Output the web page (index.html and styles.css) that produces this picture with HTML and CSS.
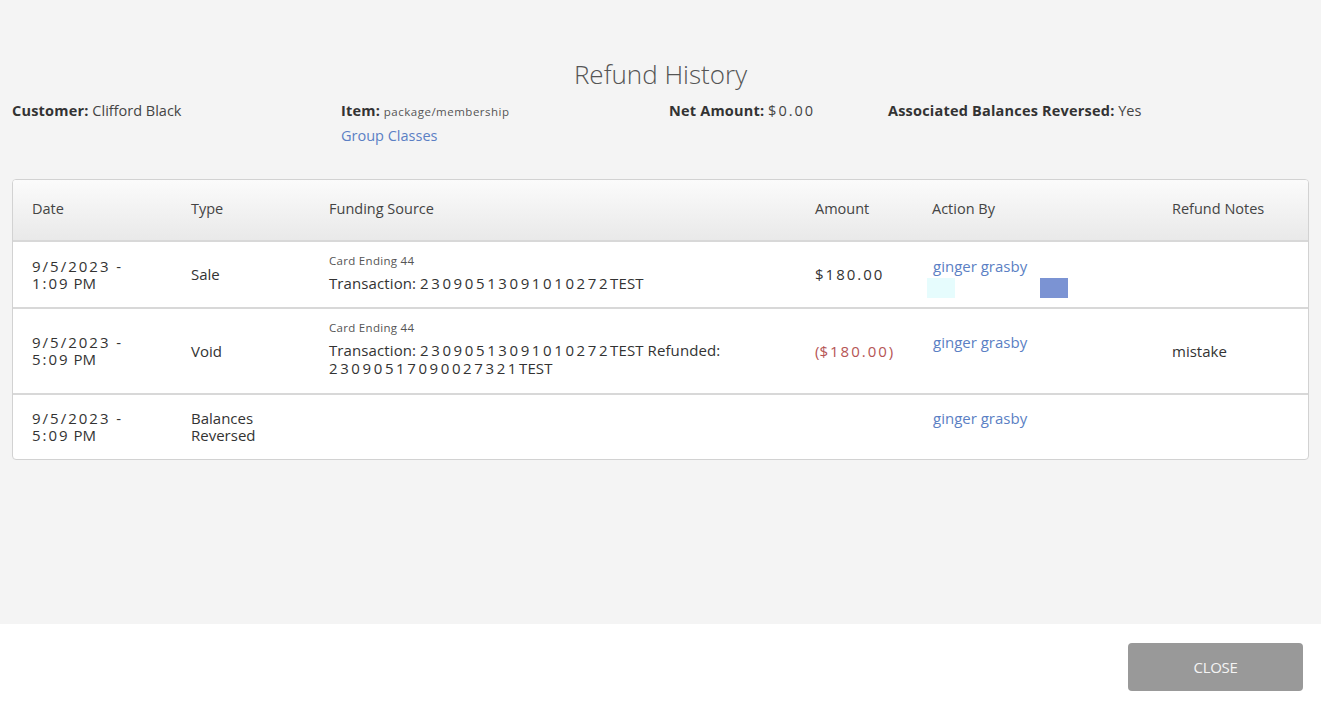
FILE: index.html
```html
<!DOCTYPE html>
<html>
<head>
<meta charset="utf-8">
<link rel="stylesheet" href="styles.css">
</head>
<body>
<div class="modal">
  <div class="content">
    <h1 class="title">Refund History</h1>
    <div class="info">
      <div class="info-item"><b>Customer:</b> Clifford Black</div>
      <div class="info-item"><div><b>Item:</b> <span class="tiny">package/membership</span></div><a class="link" href="#">Group Classes</a></div>
      <div class="info-item"><b>Net Amount:</b> <span class="num">$0.00</span></div>
      <div class="info-item"><b>Associated Balances Reversed:</b> Yes</div>
    </div>
    <div class="table-wrap">
      <table class="grid">
        <colgroup>
          <col class="c-date"><col class="c-type"><col class="c-fund"><col class="c-amt"><col class="c-by"><col class="c-notes">
        </colgroup>
        <thead>
          <tr><th>Date</th><th>Type</th><th>Funding Source</th><th>Amount</th><th>Action By</th><th>Refund Notes</th></tr>
        </thead>
        <tbody>
          <tr class="r1">
            <td><div class="ln num">9/5/2023 -</div><div class="ln"><span class="num">1:09</span> PM</div></td>
            <td>Sale</td>
            <td><div class="card">Card Ending 44</div><div class="txn">Transaction: <span class="num">23090513091010272</span>TEST</div></td>
            <td><span class="num">$180.00</span></td>
            <td class="by"><a class="link" href="#">ginger grasby</a><div class="spacer"><div class="boxes"><span class="box cyan"></span><span class="box blue"></span></div></div></td>
            <td></td>
          </tr>
          <tr class="r2">
            <td><div class="ln num">9/5/2023 -</div><div class="ln"><span class="num">5:09</span> PM</div></td>
            <td>Void</td>
            <td><div class="card">Card Ending 44</div><div class="txn"><div class="ln2">Transaction: <span class="num">23090513091010272</span>TEST Refunded:</div><div class="ln2"><span class="num">23090517090027321</span>TEST</div></div></td>
            <td class="neg">(<span class="num">$180.00</span>)</td>
            <td class="by"><a class="link" href="#">ginger grasby</a><div class="spacer"></div></td>
            <td>mistake</td>
          </tr>
          <tr class="r3">
            <td><div class="ln num">9/5/2023 -</div><div class="ln"><span class="num">5:09</span> PM</div></td>
            <td><div class="ln">Balances</div><div class="ln">Reversed</div></td>
            <td></td>
            <td></td>
            <td class="by"><a class="link" href="#">ginger grasby</a><div class="spacer"></div></td>
            <td></td>
          </tr>
        </tbody>
      </table>
    </div>
  </div>
  <div class="footer">
    <button class="close">CLOSE</button>
  </div>
</div>
</body>
</html>
```

FILE: styles.css
```css
* { box-sizing: border-box; }
html, body { margin: 0; padding: 0; }
body {
  font-family: "Open Sans", "Liberation Sans", sans-serif;
  color: #333;
  background: #fff;
}
.modal { width: 1321px; height: 706px; display: flex; flex-direction: column; }
.content {
  background: #f4f4f4;
  height: 624px;
  padding: 56px 12px 0 12px;
}
.title {
  margin: 0;
  text-align: center;
  font-weight: 300;
  font-size: 26px;
  line-height: 36px;
  color: #555;
}
.info {
  display: grid;
  grid-template-columns: 329px 328px 219px 1fr;
  font-size: 14.5px;
  line-height: 24px;
  color: #444;
  margin-top: 7px;
}
.info b { font-weight: 700; color: #333; letter-spacing: 0.2px; }
.info .link { display: block; }
.tiny { font-size: 11.5px; color: #555; letter-spacing: 0.5px; }
.num { letter-spacing: 2px; }
.txn .num { letter-spacing: 2.6px; }
.link { color: #5b7fc4; text-decoration: none; }
.table-wrap {
  margin-top: 31px;
  border: 1px solid #d2d2d2;
  border-radius: 4px;
  overflow: hidden;
  background: #fff;
}
.grid { width: 100%; border-collapse: collapse; table-layout: fixed; }
.c-date { width: 159px; }
.c-type { width: 138px; }
.c-fund { width: 486px; }
.c-amt { width: 117px; }
.c-by { width: 240px; }
.c-notes { width: auto; }
thead th {
  height: 61px;
  text-align: left;
  font-weight: 400;
  font-size: 14.5px;
  color: #444;
  padding: 0 0 4px 19px;
  background: linear-gradient(#fbfbfb, #e9e9e9);
  border-bottom: 2px solid #d8d8d8;
}
tbody td {
  font-size: 15px;
  line-height: 17px;
  padding: 0 0 0 19px;
  vertical-align: middle;
  color: #333;
  border-bottom: 2px solid #d8d8d8;
}
.ln { height: 17px; line-height: 17px; }
.ln2 { height: 18px; line-height: 18px; }
tbody tr:last-child td { border-bottom: none; }
.r1 td { height: 67px; }
.r2 td { height: 86px; }
.r3 td { height: 65px; }
.card { font-size: 11.5px; line-height: 12px; color: #555; margin-bottom: 7px; margin-top: -3px; letter-spacing: 0.3px; }
.txn { line-height: 18px; letter-spacing: 0.1px; }
.neg { color: #b55454; }
.by { padding-left: 20px; }
.by .link { display: block; font-size: 15px; line-height: 17px; }
.spacer { height: 17px; }
.boxes { display: flex; gap: 85px; padding-top: 3px; margin-left: -6px; }
.box { width: 28px; height: 20px; display: block; flex: none; }
.cyan { background: #e6fcfd; }
.blue { background: #7b93d3; }
.footer {
  flex: 1;
  background: #fff;
  display: flex;
  justify-content: flex-end;
  align-items: flex-start;
  padding: 19px 18px 0 0;
}
.close {
  width: 175px;
  height: 48px;
  border: none;
  border-radius: 4px;
  background: #999;
  color: #f4f4f4;
  font-family: "Open Sans", "Liberation Sans", sans-serif;
  font-size: 15px;
  letter-spacing: -0.3px;
}
```
